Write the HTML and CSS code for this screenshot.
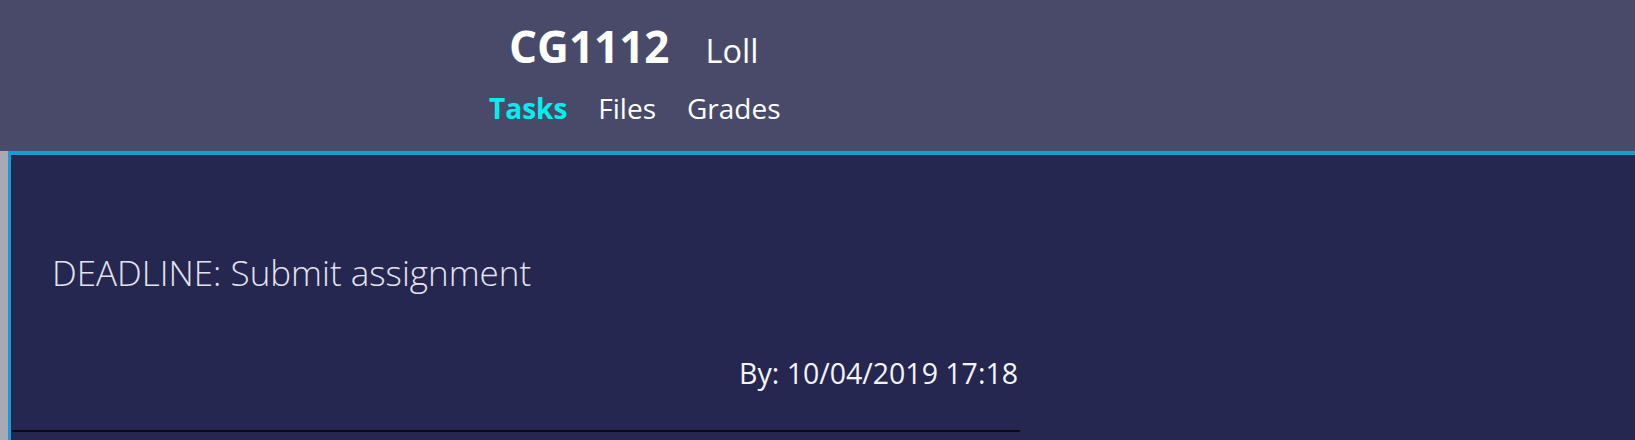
FILE: index.html
```html
<!DOCTYPE html>
<html>
<head>
<meta charset="utf-8">
<link rel="stylesheet" href="styles.css">
</head>
<body>
<header class="header">
  <div class="title-block">
    <div class="title-row">
      <span class="code">CG1112</span>
      <span class="name">Loll</span>
    </div>
    <nav class="tabs">
      <span class="tab active">Tasks</span>
      <span class="tab">Files</span>
      <span class="tab">Grades</span>
    </nav>
  </div>
</header>
<main class="content">
  <section class="task-card">
    <div class="task-title">DEADLINE: Submit assignment</div>
    <div class="task-date">By: 10/04/2019 17:18</div>
  </section>
</main>
</body>
</html>
```
FILE: styles.css
```css
html, body {
  margin: 0;
  padding: 0;
  height: 100%;
  overflow: hidden;
}
body {
  background: #a9a9b5;
  font-family: "Open Sans", "Noto Sans", sans-serif;
  display: flex;
  flex-direction: column;
}
.header {
  background: #494a69;
  height: 151px;
  flex: none;
  display: flex;
  padding-left: 489px;
  box-sizing: border-box;
}
.title-block {
  display: flex;
  flex-direction: column;
  align-items: flex-start;
}
.title-row {
  display: flex;
  align-items: baseline;
  margin-left: 20px;
  margin-top: 18px;
  color: #ffffff;
  gap: 36px;
}
.code {
  font-weight: 700;
  font-size: 44px;
  line-height: 56px;
}
.name {
  font-size: 32.5px;
  line-height: 44px;
}
.tabs {
  display: flex;
  gap: 31px;
  margin-top: 16px;
  font-size: 28px;
  line-height: 36px;
  color: #ffffff;
}
.tab.active {
  color: #00f0f0;
  font-weight: 700;
}
.content {
  flex: 1;
  margin-left: 8px;
  background: #262750;
  border-top: 4px solid #1c9ad6;
  border-left: 3px solid #1c9ad6;
}
.task-card {
  width: 1008px;
  margin-left: 1px;
  padding-top: 94px;
  border-bottom: 2px solid #0a0a14;
  display: flex;
  flex-direction: column;
}
.task-title {
  padding-left: 40px;
  font-size: 35px;
  font-weight: 300;
  line-height: 48px;
  color: #e4e4ee;
}
.task-date {
  align-self: flex-end;
  margin-top: 57px;
  margin-right: 2px;
  margin-bottom: 38px;
  font-size: 28.5px;
  line-height: 38px;
  color: #f4f4f8;
}
```
